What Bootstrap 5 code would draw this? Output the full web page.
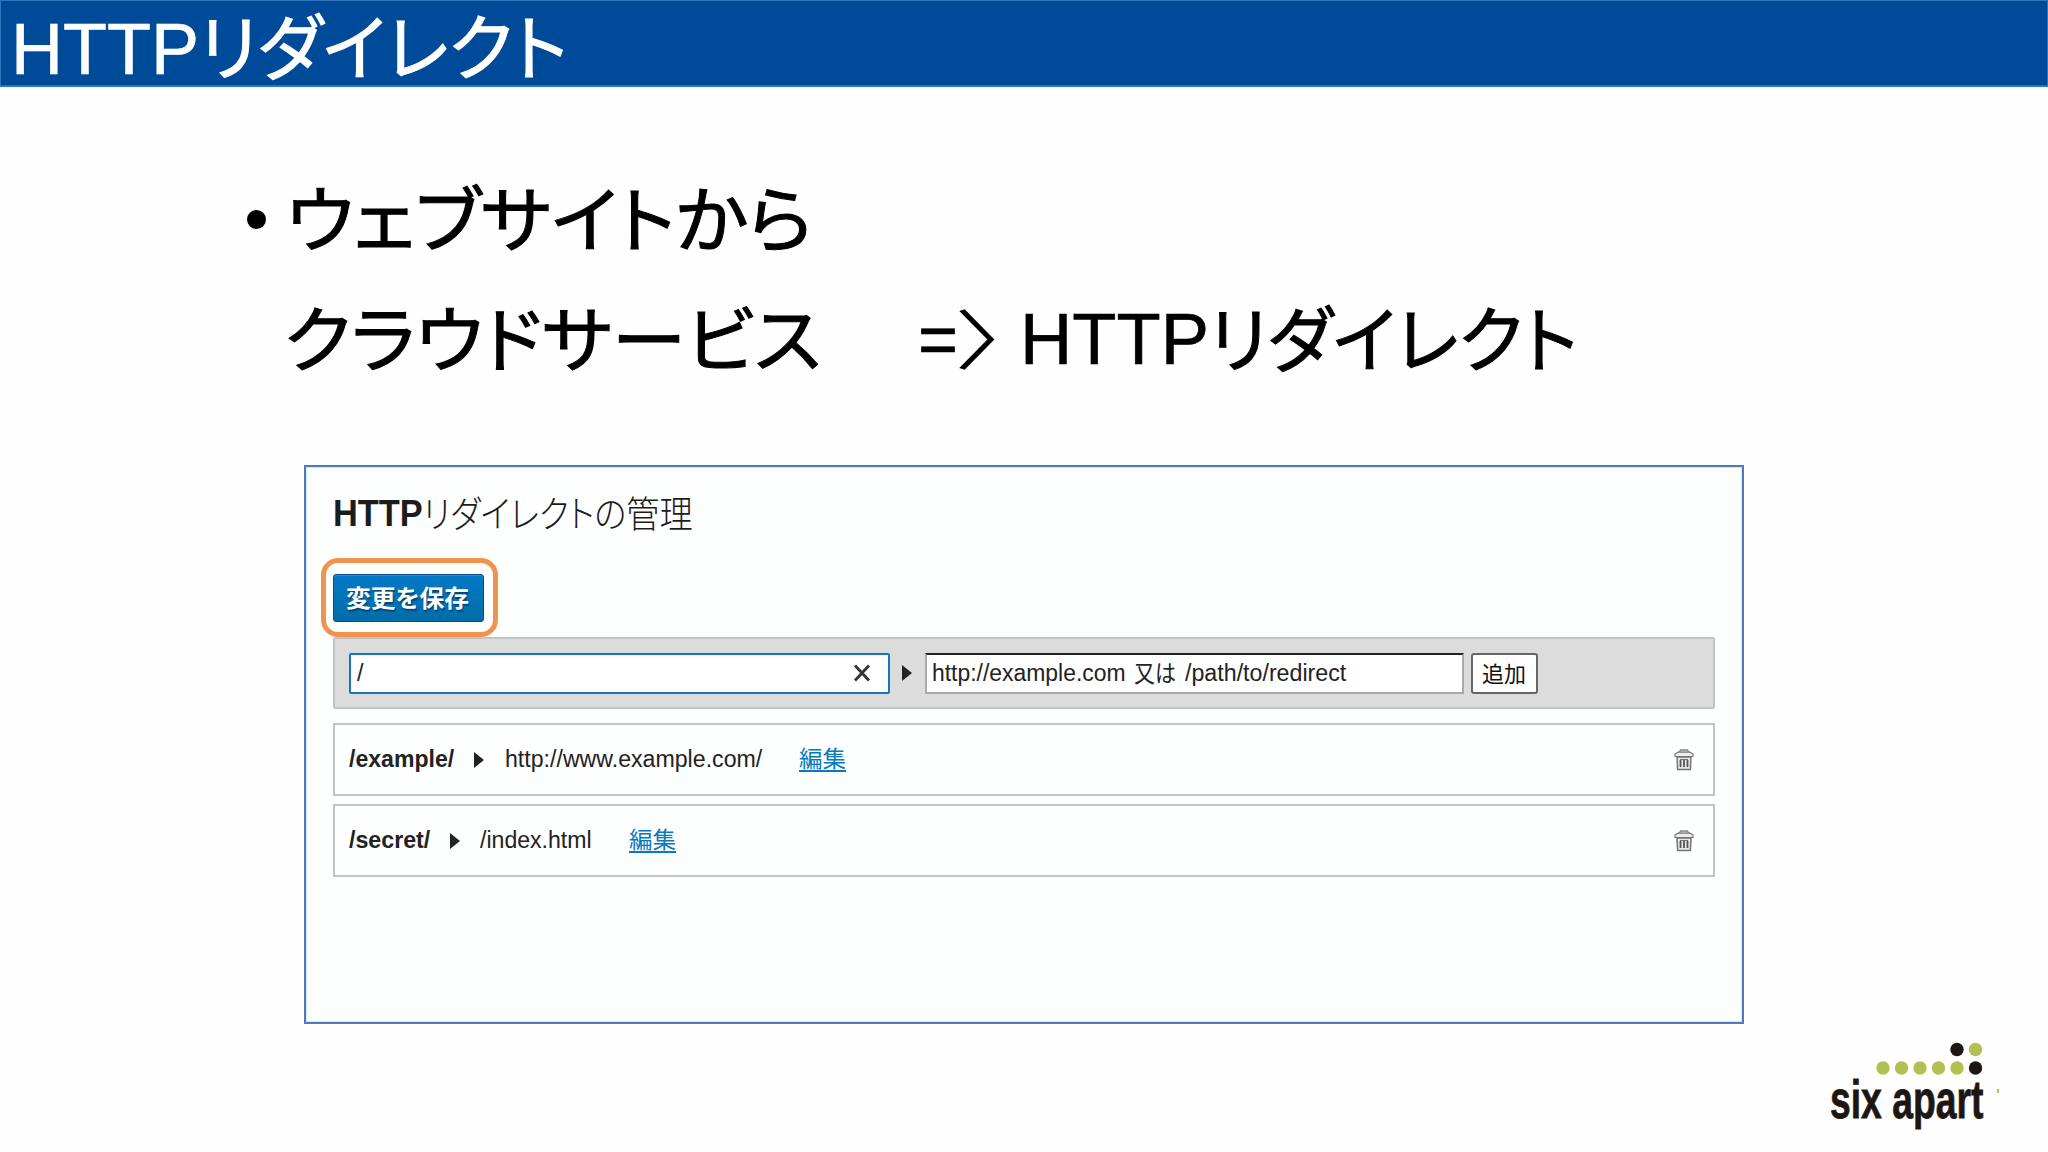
<!DOCTYPE html>
<html lang="ja">
<head>
<meta charset="utf-8">
<meta name="viewport" content="width=device-width, initial-scale=1">
<title>HTTPリダイレクト</title>
<link href="https://cdn.jsdelivr.net/npm/bootstrap@5.3.0/dist/css/bootstrap.min.css" rel="stylesheet">
<style>
body{width:2048px;height:1152px;overflow:hidden;background:#fefefe;color:#000;font-family:"Liberation Sans","Noto Sans CJK JP",sans-serif}
.fit{display:block;flex:none;white-space:nowrap;font-feature-settings:"palt"}
.fit>span{display:inline-block;transform-origin:0 50%}
.slide-head{height:87px;background:#004b99;border:1px solid #2f75bd;border-bottom-width:2px;color:#fff;padding-left:10px;font-size:72px;line-height:97px}
.jp{font-family:"Noto Sans CJK JP",sans-serif}
.slide-head,.slide-copy{-webkit-text-stroke:.6px currentColor}
.slide-head .jp,.slide-copy .jp{-webkit-text-stroke-width:1px}
.slide-copy .jp{margin-top:-9px}
.slide-head .jp{line-height:84px}
.slide-copy{height:378px;padding:72px 0 0 247px;font-size:72px}
.copy-line{height:120px;line-height:120px}
.dot{width:19px;height:19px;border-radius:50%;background:#000;flex:none;margin-right:20px}
.indent{margin-left:37px;margin-right:97px}
.slide-copy .chev{font-weight:300;font-size:64px;margin-right:14px;margin-top:-7px}
.panel{width:1440px;height:559px;margin-left:304px;border:2px solid #4c7cb8;box-shadow:inset 0 0 0 1px #dbe6f4;padding:0 27px;background:#fdfefe;color:#222}
.panel-title{height:107px;padding:22px 0 0;font-size:37px;line-height:50px;color:#1c1c1c}
.panel-title .jp{margin-top:-2px}
.save{position:relative;width:151px;height:48px;border:1px solid #084c92;border-radius:3px;background:linear-gradient(#0479c6,#006da8);box-shadow:inset 0 1px 0 #2c8fd0;color:#fff;font-size:24px;line-height:44px;padding:0 12px;text-shadow:1px 2px 1px #06477a;font-weight:700}
.ring{position:absolute;left:-13px;top:-17px;width:177px;height:79px;border:5px solid #f0934e;border-radius:17px;z-index:2}
.add-bar{height:72px;margin-top:15px;background:#dcdcdd;border:2px solid #c2c3c4;border-radius:2px;padding-left:14px;font-size:23.5px}
.field{height:41px;background:#fff;border:2px solid #aaa;border-top-color:#222;line-height:37px;padding:0 6px;flex:none}
.f-on{width:541px;border-color:#1976b6;border-radius:2px}
.f-to{width:539px;padding-left:5px}
.f-to .jp{margin:-1px 9px 0 8px}
.add-btn{width:67px;height:41px;border:2px solid #666;border-radius:3px;background:#fff;line-height:34px;padding:0 9px;color:#111;font-size:22px;flex:none;margin-left:7px}
.rule{height:73px;border:2px solid #c3c5c6;padding:0 19px 0 14px;font-size:23.5px}
.rule a{color:#0878bf;text-decoration:none}
.rule a .fit{border-bottom:2px solid #0878bf;height:25px;line-height:21px;font-size:23px;margin-top:-1px}
.brand{width:175px;margin:18px 0 0 1829px}
</style>
<script src="https://cdn.jsdelivr.net/npm/bootstrap@5.3.0/dist/js/bootstrap.bundle.min.js"></script>
</head>
<body>
<header class="slide-head d-flex">
  <div class="fit" data-w="188"><span>HTTP</span></div>
  <div class="fit jp" data-w="369"><span>リダイレクト</span></div>
</header>
<main>
<section class="slide-copy">
  <div class="copy-line d-flex align-items-center"><i class="dot"></i><div class="fit jp" data-w="527"><span>ウェブサイトから</span></div></div>
  <div class="copy-line d-flex align-items-center"><div class="fit indent jp" data-w="537"><span>クラウドサービス</span></div><div class="fit" data-w="40"><span>=</span></div><div class="fit jp chev" data-w="48"><span>〉</span></div><div class="fit" data-w="189"><span>HTTP</span></div><div class="fit jp" data-w="369"><span>リダイレクト</span></div></div>
</section>
<section class="panel">
  <h1 class="panel-title d-flex m-0 fw-normal"><div class="fit fw-bold" data-w="90"><span>HTTP</span></div><div class="fit jp fw-light" data-w="270"><span>リダイレクトの管理</span></div></h1>
  <div class="save"><div class="fit jp" data-w="123"><span>変更を保存</span></div><i class="ring"></i></div>
  <div class="add-bar d-flex align-items-center">
    <div class="field f-on d-flex align-items-center justify-content-between"><span>/</span><svg width="18" height="18" viewBox="0 0 18 18" style="margin-right:11px"><path d="M2 1.5 16 16.5M16 1.5 2 16.5" stroke="#333" stroke-width="2.8"/></svg></div>
    <svg width="35" height="18" viewBox="0 0 35 18" class="flex-shrink-0"><path d="M12 1v16l10-8z" fill="#222"/></svg>
    <div class="field f-to d-flex"><div class="fit" data-w="194"><span>http://example.com</span></div><div class="fit jp" data-w="42"><span>又は</span></div><div class="fit" data-w="161"><span>/path/to/redirect</span></div></div>
    <div class="add-btn"><div class="fit jp" data-w="44"><span>追加</span></div></div>
  </div>
  <div class="rule d-flex align-items-center" style="margin-top:14px">
    <div class="fit fw-bold" data-w="105"><span>/example/</span></div>
    <svg width="51" height="18" viewBox="0 0 51 18"><path d="M20 1v16l10-8z" fill="#222"/></svg>
    <div class="fit" data-w="257"><span>http://www.example.com/</span></div>
    <a href="#" style="margin-left:37px"><div class="fit jp" data-w="47"><span>編集</span></div></a>
    <svg class="ms-auto" width="20" height="24" viewBox="0 0 20 24"><use href="#bin"/></svg>
  </div>
  <div class="rule d-flex align-items-center" style="margin-top:8px">
    <div class="fit fw-bold" data-w="81"><span>/secret/</span></div>
    <svg width="50" height="18" viewBox="0 0 50 18"><path d="M20 1v16l10-8z" fill="#222"/></svg>
    <div class="fit" data-w="112"><span>/index.html</span></div>
    <a href="#" style="margin-left:37px"><div class="fit jp" data-w="47"><span>編集</span></div></a>
    <svg class="ms-auto" width="20" height="24" viewBox="0 0 20 24"><use href="#bin"/></svg>
  </div>
</section>
</main>
<footer class="brand">
<svg class="d-block" width="175" height="98" viewBox="1829 1042 175 98">
  <defs><g id="bin"><path d="M5 4.5 6.5 2h7L15 4.5" fill="#ddd" stroke="#888" stroke-width="1.3"/><path d="M1 8.5V6l3-1.8h12L19 6v2.5z" fill="#eee" stroke="#777" stroke-width="1.2"/><path d="M3 9h14l-.6 12.5H3.6z" fill="#e6e6e6" stroke="#777" stroke-width="1.5"/><path d="M6.5 12v7M10 12v7M13.500 12v7" stroke="#555" stroke-width="1.8"/><path d="M6 11.500h8" stroke="#777"/></g></defs>
  <g fill="#b3c152"><circle cx="1883" cy="1068" r="6.700"/><circle cx="1901.500" cy="1068" r="6.700"/><circle cx="1920" cy="1068" r="6.700"/><circle cx="1938.500" cy="1068" r="6.700"/><circle cx="1957" cy="1068" r="6.700"/><circle cx="1975.500" cy="1049.500" r="6.700"/><path d="M1997 1089h2v4h-2z"/></g>
  <g fill="#1d1714"><circle cx="1957" cy="1049.500" r="6.700"/><circle cx="1975.500" cy="1068" r="6.700"/></g>
  <text transform="translate(1830 1118) scale(.645 1)" font-family="Liberation Sans, sans-serif" font-weight="700" font-size="54" fill="#1d1714" stroke="#1d1714" stroke-width=".8" textLength="238" lengthAdjust="spacingAndGlyphs">six apart</text>
</svg>
</footer>
<script>
// Squeeze each run of text to the width of its box
document.querySelectorAll('.fit').forEach(function (box) {
  var run = box.firstElementChild, w = +box.dataset.w, natural = run.offsetWidth;
  box.style.width = w + 'px';
  run.style.transform = 'scaleX(' + w / natural + ')';
});
</script>
</body>
</html>
